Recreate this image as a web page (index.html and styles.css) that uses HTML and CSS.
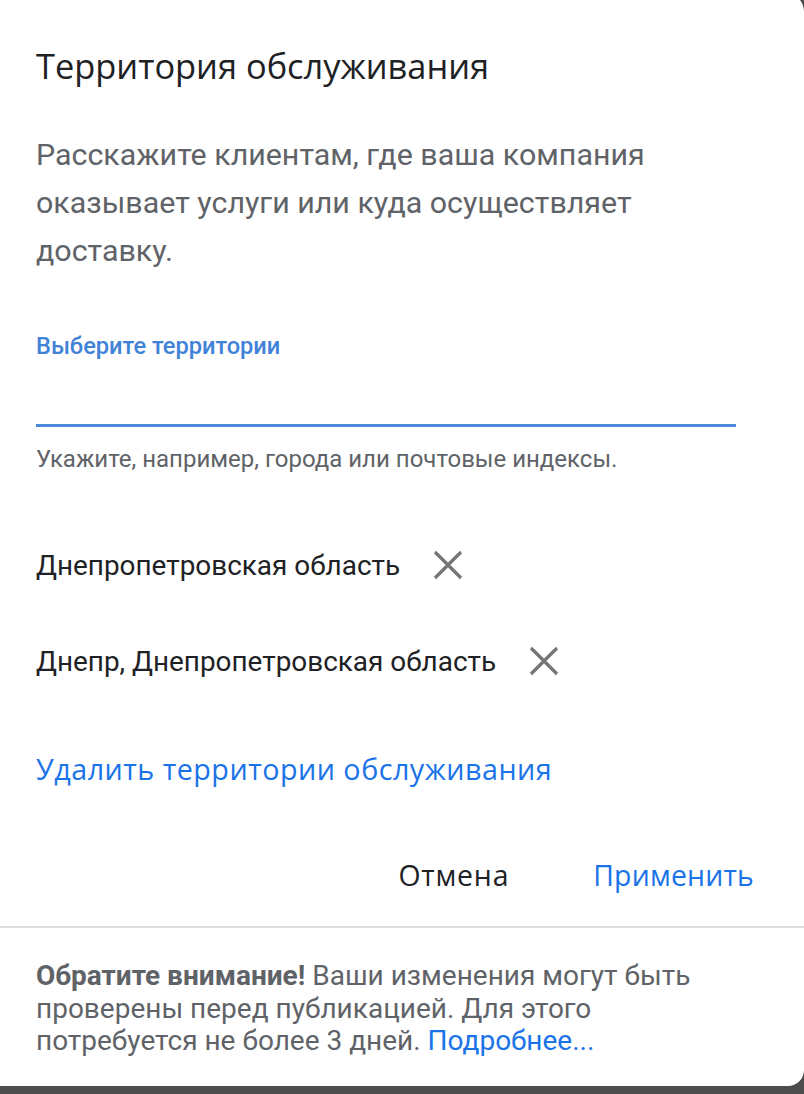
FILE: index.html
```html
<!DOCTYPE html>
<html lang="ru">
<head>
<meta charset="utf-8">
<title>Территория обслуживания</title>
<link rel="stylesheet" href="styles.css">
</head>
<body>
<div class="dialog">
  <div class="dialog-body">
    <h1 class="title">Территория обслуживания</h1>
    <p class="desc">Расскажите клиентам, где ваша компания оказывает услуги или куда осуществляет доставку.</p>
    <div class="field">
      <div class="field-label">Выберите территории</div>
      <div class="field-input"></div>
      <div class="field-hint">Укажите, например, города или почтовые индексы.</div>
    </div>
    <ul class="areas">
      <li class="area">
        <span class="area-name">Днепропетровская область</span>
        <span class="remove"><svg viewBox="0 0 30 30" width="30" height="30"><path d="M2 2L28 28M28 2L2 28" stroke="#757575" stroke-width="3.2" fill="none"/></svg></span>
      </li>
      <li class="area">
        <span class="area-name">Днепр, Днепропетровская область</span>
        <span class="remove"><svg viewBox="0 0 30 30" width="30" height="30"><path d="M2 2L28 28M28 2L2 28" stroke="#757575" stroke-width="3.2" fill="none"/></svg></span>
      </li>
    </ul>
    <div class="delete-link">Удалить территории обслуживания</div>
    <div class="actions">
      <span class="btn btn-cancel">Отмена</span>
      <span class="btn btn-apply">Применить</span>
    </div>
  </div>
  <div class="notice">
    <b>Обратите внимание!</b> Ваши изменения могут быть проверены перед публикацией. Для этого потребуется не более 3 дней. <span class="notice-link">Подробнее...</span>
  </div>
</div>
</body>
</html>
```

FILE: styles.css
```css
html, body {
  margin: 0;
  padding: 0;
}
body {
  background: #4d4d4d;
  width: 804px;
  height: 1094px;
  overflow: hidden;
  font-family: Roboto, "Noto Sans", sans-serif;
}
.dialog {
  margin-top: -8px;
  width: 804px;
  height: 1094px;
  background: #fff;
  border-radius: 0 20px 16px 0;
  display: flex;
  flex-direction: column;
}
.dialog-body {
  padding: 52px 36px 0 36px;
  display: flex;
  flex-direction: column;
}
.title {
  margin: 0;
  font-family: "Open Sans", sans-serif;
  font-weight: 400;
  font-size: 34.4px;
  line-height: 44px;
  color: #202124;
}
.desc {
  margin: 43px 0 0 0;
  font-size: 30.4px;
  line-height: 48px;
  color: #5f6368;
  width: 680px;
}
.field {
  margin-top: 57px;
  width: 700px;
}
.field-label {
  font-size: 23.6px;
  line-height: 28px;
  color: #3f82d8;
  font-weight: 500;
}
.field-input {
  height: 64px;
  border-bottom: 3px solid #4a89dc;
}
.field-hint {
  margin-top: 18px;
  font-size: 24px;
  line-height: 28px;
  color: #5f6368;
}
.areas {
  list-style: none;
  margin: 68px 0 0 0;
  padding: 0;
  display: flex;
  flex-direction: column;
  gap: 48px;
}
.area {
  height: 48px;
  display: flex;
  align-items: center;
  gap: 33px;
}
.area-name {
  font-size: 27.9px;
  color: #202124;
}
.remove {
  display: flex;
}
.delete-link {
  margin-top: 64px;
  font-family: "Open Sans", sans-serif;
  font-size: 28.7px;
  line-height: 40px;
  color: #1a73e8;
  letter-spacing: 0.5px;
}
.actions {
  margin: 62px 14px 27px 0;
  height: 48px;
  display: flex;
  justify-content: flex-end;
  align-items: center;
  gap: 84px;
}
.btn {
  font-family: "Open Sans", sans-serif;
  font-size: 28.4px;
  letter-spacing: 0.5px;
}
.btn-cancel { color: #202124; letter-spacing: 0.8px; }
.btn-apply { color: #1a73e8; letter-spacing: 0.2px; }
.notice {
  border-top: 2px solid #dadce0;
  padding: 32px 100px 0 36px;
  font-size: 28px;
  line-height: 32.5px;
  color: #5f6368;
}
.notice b {
  font-weight: 700;
}
.notice-link {
  color: #1a73e8;
}
```
